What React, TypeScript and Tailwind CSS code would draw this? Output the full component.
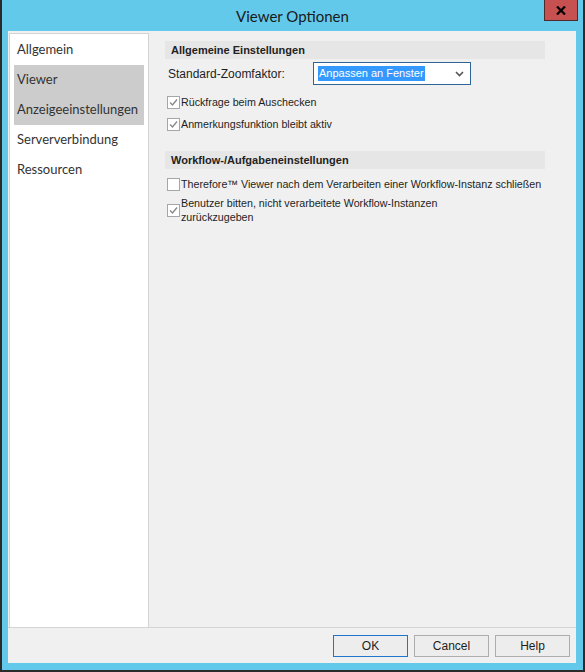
import React from 'react';

const uiFont = { fontFamily: '"Liberation Sans", Arial, sans-serif' };
const listFont = { fontFamily: 'Lato, "Noto Sans", sans-serif' };

const CheckBox: React.FC<{ checked?: boolean }> = ({ checked }) => (
  <span className="w-[13px] h-[13px] shrink-0 border border-[#a6a6a6] bg-white flex items-center justify-center">
    {checked && (
      <svg width="9" height="9" viewBox="0 0 9 9">
        <path d="M1 4.5 L3.5 7 L8 1.5" fill="none" stroke="#8a8a8a" strokeWidth="1.4" />
      </svg>
    )}
  </span>
);

const SectionHeader: React.FC<{ title: string }> = ({ title }) => (
  <div className="w-[380px] h-[18px] bg-[#e6e6e6] pl-[6px] flex items-center text-[11px] font-bold text-[#222]">
    {title}
  </div>
);

const navItems = ['Allgemein', 'Viewer', 'Anzeigeeinstellungen', 'Serververbindung', 'Ressourcen'];

const App: React.FC = () => {
  return (
    <div className="w-[585px] h-[672px] bg-[#2b2b2b] overflow-hidden">
      <div className="ml-[2px] w-[581px] h-[670px] bg-[#63c9ea] flex flex-col">
        {/* Title bar */}
        <div className="relative h-[31px] flex items-center justify-center shrink-0">
          <span className="text-[15px] text-[#1a1a1a] pt-[1px]" style={listFont}>Viewer Optionen</span>
          <button className="absolute top-0 right-[5px] w-[34px] h-[21px] bg-[#c75050] border border-[#4d2b2b] border-t-0 flex items-center justify-center">
            <svg width="10" height="9" viewBox="0 0 10 9">
              <path d="M1 0.5 L9 8.5 M9 0.5 L1 8.5" stroke="#000" strokeWidth="2.2" />
            </svg>
          </button>
        </div>

        {/* Client area */}
        <div className="ml-[6px] w-[568px] h-[632px] bg-[#f0f0f0] flex flex-col" style={uiFont}>
          <div className="flex flex-1 pt-[2px] pl-[1px]">
            {/* Navigation list */}
            <div className="w-[140px] bg-white border border-b-0 border-[#d4d4d4] px-[4px] pt-[1px]" style={listFont}>
              {navItems.map((item, i) => {
                const selected = i === 1 || i === 2;
                return (
                  <div
                    key={item}
                    className={`h-[30px] flex items-center pl-[3px] text-[13px] text-[#333] ${selected ? 'bg-[#cccccc]' : ''}`}
                  >
                    {item}
                  </div>
                );
              })}
            </div>

            {/* Settings */}
            <div className="flex-1 pl-[16px] pt-[8px] text-[10.7px] text-[#1e1e1e]">
              <SectionHeader title="Allgemeine Einstellungen" />

              <div className="mt-[3px] h-[23px] flex items-center">
                <span className="w-[148px] pl-[3px] text-[12px]">Standard-Zoomfaktor:</span>
                <div className="w-[158px] h-[23px] border border-[#2f6495] bg-white flex items-center pl-[4px] pr-[6px]">
                  <span className="bg-[#3399ff] text-white px-[1px] leading-[15px] text-[11px]">Anpassen an Fenster</span>
                  <svg className="ml-auto" width="9" height="6" viewBox="0 0 9 6">
                    <path d="M1 1 L4.5 4.5 L8 1" fill="none" stroke="#555" strokeWidth="1.6" />
                  </svg>
                </div>
              </div>

              <div className="mt-[9px] h-[16px] flex items-center gap-[1px] pl-[2px]">
                <CheckBox checked />
                <span className="whitespace-nowrap">Rückfrage beim Auschecken</span>
              </div>
              <div className="mt-[6px] h-[16px] flex items-center gap-[1px] pl-[2px]">
                <CheckBox checked />
                <span className="whitespace-nowrap">Anmerkungsfunktion bleibt aktiv</span>
              </div>

              <div className="mt-[19px]">
                <SectionHeader title="Workflow-/Aufgabeneinstellungen" />
              </div>

              <div className="mt-[7px] h-[16px] flex items-center gap-[1px] pl-[2px]">
                <CheckBox />
                <span className="whitespace-nowrap">Therefore™ Viewer nach dem Verarbeiten einer Workflow-Instanz schließen</span>
              </div>
              <div className="mt-[4px] flex items-center gap-[1px] pl-[2px]">
                <CheckBox checked />
                <span className="leading-[14px] w-[270px]">
                  Benutzer bitten, nicht verarbeitete Workflow-Instanzen zurückzugeben
                </span>
              </div>
            </div>
          </div>

          {/* Buttons */}
          <div className="h-[36px] shrink-0 border-t border-[#d4d4d4] flex justify-end items-start gap-[6px] pt-[7px] pr-[6px] text-[12px] text-[#1e1e1e]">
            <button className="w-[75px] h-[22px] border border-[#1f75cc] bg-[#ededed]">OK</button>
            <button className="w-[75px] h-[22px] border border-[#adadad] bg-[#ededed]">Cancel</button>
            <button className="w-[75px] h-[22px] border border-[#adadad] bg-[#ededed]">Help</button>
          </div>
        </div>
      </div>
    </div>
  );
};

export default App;
